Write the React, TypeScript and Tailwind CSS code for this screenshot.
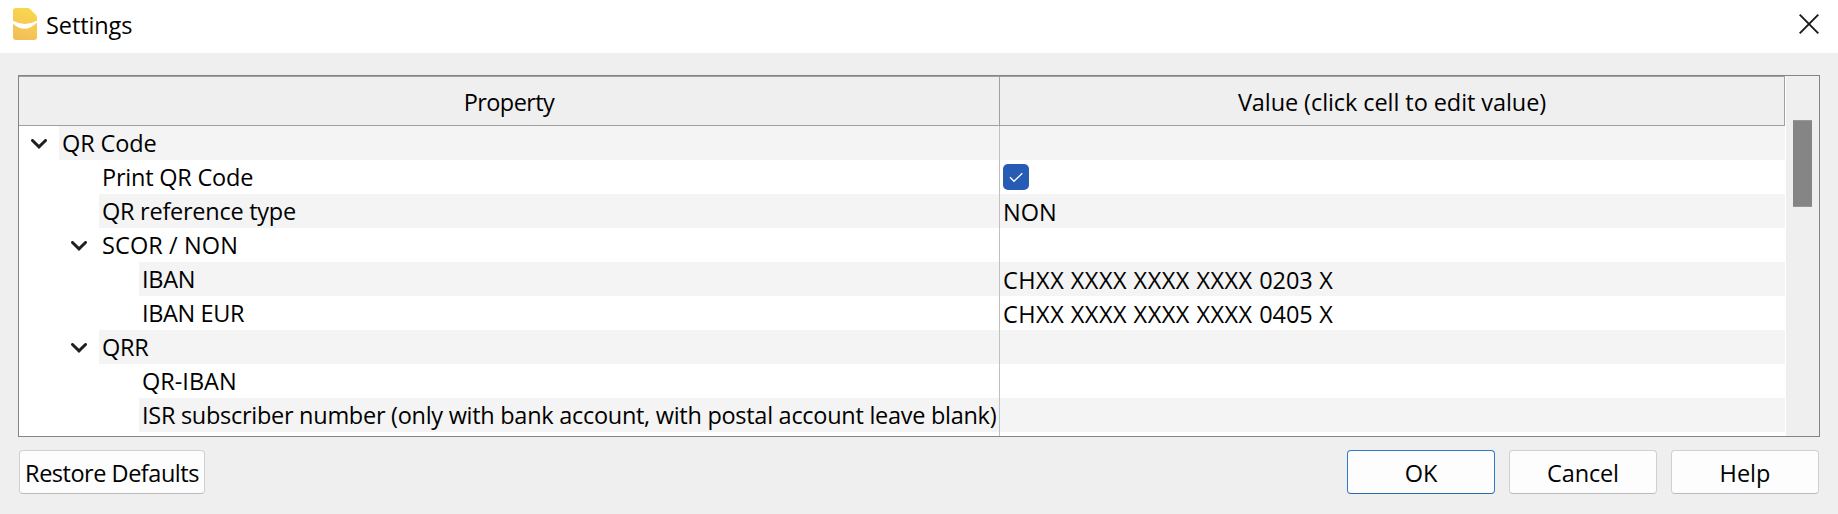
import type { ReactNode } from "react";

type Row = {
  label: string;
  level: 0 | 1 | 2;
  tracking: string;
  open?: boolean;
  value?: ReactNode;
};

const CheckedBox = () => (
  <svg className="block size-[26px]" viewBox="0 0 26 26" fill="none">
    <rect width="26" height="26" rx="5" fill="#265cb3" />
    <path d="M7 13.2 L11 17.3 L19.3 9.2" stroke="#fff" strokeWidth="1.3" />
  </svg>
);

const Account = ({ digits }: { digits: string }) => (
  <span className="pt-0.5 tracking-[0.48px]">
    CHXX XXXX XXXX XXXX <span className="tracking-[-0.1px]">{digits}</span> X
  </span>
);

const rows: Row[] = [
  { label: "QR Code", level: 0, tracking: "tracking-[-0.1px]", open: true },
  { label: "Print QR Code", level: 1, tracking: "tracking-[-0.22px]", value: <CheckedBox /> },
  { label: "QR reference type", level: 1, tracking: "tracking-[-0.26px]", value: <span className="pt-0.5">NON</span> },
  { label: "SCOR / NON", level: 1, tracking: "tracking-[0.1px]", open: true },
  { label: "IBAN", level: 2, tracking: "tracking-[-0.25px]", value: <Account digits="0203" /> },
  { label: "IBAN EUR", level: 2, tracking: "tracking-[-0.38px]", value: <Account digits="0405" /> },
  { label: "QRR", level: 1, tracking: "tracking-[-0.3px]", open: true },
  { label: "QR-IBAN", level: 2, tracking: "tracking-[0px]" },
  { label: "ISR subscriber number (only with bank account, with postal account leave blank)", level: 2, tracking: "tracking-[-0.28px]" },
];

const indents = ["w-10", "w-20", "w-[120px]"];

const Chevron = () => (
  <svg className="mt-px mr-3 block h-[10px] w-4" viewBox="0 0 16 10" fill="none">
    <path d="M1.5 1.5 L8 7.8 L14.5 1.5" stroke="#1f1f1f" strokeWidth="3" strokeLinecap="round" />
  </svg>
);

const AppIcon = () => (
  <svg className="block h-8 w-6" viewBox="0 0 24 32">
    <defs>
      <linearGradient id="sheet" x1="0.6" y1="0" x2="0.3" y2="1">
        <stop offset="0" stopColor="#f9d74e" />
        <stop offset="1" stopColor="#f3bd58" />
      </linearGradient>
    </defs>
    <path d="M3 0 H14.5 Q16 0 17 1 L23 7 Q24 8 24 9.5 V29 Q24 32 21 32 H3 Q0 32 0 29 V3 Q0 0 3 0 Z" fill="url(#sheet)" />
    <path d="M0 12.8 Q12 19 24 12.8 V14.5 Q12 26.5 0 15.8 Z" fill="#fff" />
  </svg>
);

export default function App() {
  return (
    <div className="flex h-[514px] w-[1838px] flex-col overflow-hidden bg-[#efefef] font-['Open_Sans','Noto_Sans',sans-serif] text-[23.5px] leading-[34px] whitespace-nowrap text-black">
      <header className="flex h-[53px] items-start bg-white pl-[13px]">
        <div className="pt-2"><AppIcon /></div>
        <h1 className="pt-2 pl-[9px] tracking-[-0.1px]">Settings</h1>
        <button className="mt-[14px] mr-[19px] ml-auto" aria-label="Close">
          <svg className="block size-5" viewBox="0 0 20 20">
            <path d="M0.7 0.7 L19.3 19.3 M19.3 0.7 L0.7 19.3" stroke="#1a1a1a" strokeWidth="1.9" />
          </svg>
        </button>
      </header>

      <main className="mt-[22px] ml-[18px] flex h-[362px] w-[1802px] border border-[#7f858d] bg-white">
        <div className="flex w-[1767px] flex-col">
          <div className="flex h-[50px] w-[1766px] border-y border-r border-[#a0a0a0] bg-[#efefef] text-center">
            <div className="w-[981px] border-r border-[#a0a0a0] pt-2"><span className="tracking-[-0.6px]">Property</span></div>
            <div className="flex-1 pt-2"><span className="tracking-[-0.08px]">Value (click cell to edit value)</span></div>
          </div>
          <div className="flex flex-1 flex-col">
            {rows.map((row, i) => (
              <div key={row.label} className="flex h-[34px]">
                <div className="flex w-[981px] shrink-0 border-r border-[#c0c0c0]">
                  <div className={`flex shrink-0 items-center justify-end ${indents[row.level]}`}>{row.open && <Chevron />}</div>
                  <div className={`min-w-0 flex-1 pl-[3px] ${i % 2 ? "" : "bg-[#f4f4f4]"}`}>
                    <span className={row.tracking}>{row.label}</span>
                  </div>
                </div>
                <div className={`flex w-[785px] items-center pl-[3px] ${i % 2 ? "" : "bg-[#f4f4f4]"}`}>{row.value}</div>
              </div>
            ))}
            <div className="w-[981px] flex-1 border-r border-[#c0c0c0]" />
          </div>
        </div>
        <div className="flex flex-1 justify-center bg-[#efefef] pt-11 pr-px">
          <div className="h-[87px] w-[19px] border-y border-[#979797] bg-[#858585]" />
        </div>
      </main>

      <footer className="mt-[13px] flex h-11 pr-[19px] pl-[19px]">
        <button className="w-[186px] rounded-[4px] border border-[#d0d0d0] border-b-[#bbb] bg-[#fdfdfd] pt-0.5"><span className="tracking-[-0.48px]">Restore Defaults</span></button>
        <div className="ml-auto flex gap-[14px]">
          <button className="w-[148px] rounded-[4px] border border-[#2f79cc] border-b-[#2b66b0] bg-[#fdfdfd] pt-0.5"><span>OK</span></button>
          <button className="w-[148px] rounded-[4px] border border-[#d0d0d0] border-b-[#bbb] bg-[#fdfdfd] pt-0.5"><span className="tracking-[-0.15px]">Cancel</span></button>
          <button className="w-[148px] rounded-[4px] border border-[#d0d0d0] border-b-[#bbb] bg-[#fdfdfd] pt-0.5"><span>Help</span></button>
        </div>
      </footer>
    </div>
  );
}
